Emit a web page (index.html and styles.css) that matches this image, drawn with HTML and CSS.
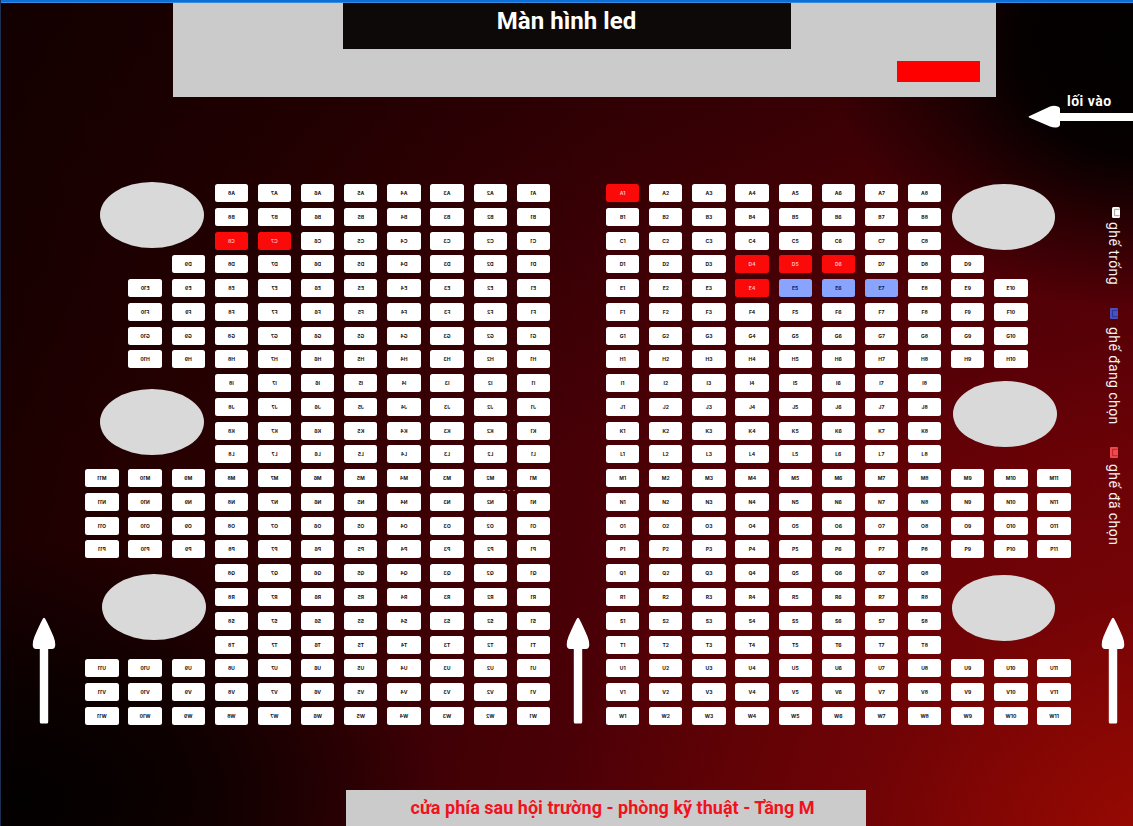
FILE: index.html
```html
<!DOCTYPE html>
<html lang="vi">
<head>
<meta charset="utf-8">
<title>Sơ đồ ghế</title>
<link rel="stylesheet" href="styles.css">
</head>
<body>
<div class="hall">
  <header class="stage">
    <div class="screen">Màn hình led</div>
    <div class="podium"></div>
  </header>

  <main class="floor">
    <section class="block block-left" id="left"></section>
    <section class="block block-right" id="right"></section>
    <aside class="legend">
      <div class="legend-item free">
        <svg class="chair" viewBox="0 0 8 11"><rect width="8" height="11" rx="1.500" fill="currentColor"/><path d="M7.600 2.300H2.600V8.700H7.600" fill="none" stroke="#8a7070" stroke-width=".7"/></svg>
        <span>ghế trống</span>
      </div>
      <div class="legend-item picking">
        <svg class="chair" viewBox="0 0 8 11"><rect width="8" height="11" rx="1" fill="currentColor"/><path d="M7.600 2.300H2.600V8.700H7.600" fill="none" stroke="#262a88" stroke-width=".8"/></svg>
        <span>ghế đang chọn</span>
      </div>
      <div class="legend-item taken">
        <svg class="chair" viewBox="0 0 8 11"><rect width="8" height="11" rx="1" fill="currentColor"/><path d="M7.600 2.300H2.600V8.700H7.600" fill="none" stroke="#ac1c20" stroke-width=".8"/></svg>
        <span>ghế đã chọn</span>
      </div>
    </aside>
  </main>

  <footer class="backdoor">cửa phía sau hội trường - phòng kỹ thuật - Tầng M</footer>

  <i class="table t1"></i><i class="table t2"></i><i class="table t3"></i>
  <i class="table t4"></i><i class="table t5"></i><i class="table t6"></i>

  <div class="entrance">lối vào</div>
  <svg class="arrow-in" viewBox="0 0 105 24"><path d="M1 11.2 22 1.5Q25 .5 28 1Q32 1.5 32 4V8H105V16H32V19.500Q32 22 28 22.500Q25 22.700 22 21.500L1 12.500Q0 11.800 1 11.200Z" fill="#fff"/></svg>
  <svg class="arrow a1" viewBox="0 0 24 108"><use href="#up"/></svg>
  <svg class="arrow a2" viewBox="0 0 24 108"><use href="#up"/></svg>
  <svg class="arrow a3" viewBox="0 0 24 108"><use href="#up"/></svg>
  <svg class="defs"><defs><path id="up" d="M11 1.500Q12 .2 13 1.500Q14.500 3.500 21.500 19.500Q23.500 24.500 23.300 28Q23 31.800 20 32H16.200V105Q16.200 106.500 14.800 106.500H9.200Q7.800 106.500 7.800 105V32H4Q1 31.800 .7 28Q.5 24.500 2.500 19.500Q9.500 3.500 11 1.500Z" fill="#fff"/></defs></svg>
  <div class="marks"><b></b><b></b><b></b></div>
</div>
<script src="seats.js"></script>
</body>
</html>
```
FILE: styles.css
```css
* { box-sizing: border-box; }
body { margin: 0; font-family: Roboto, "Liberation Sans", sans-serif; }

.hall {
  position: relative;
  width: 1133px;
  height: 826px;
  overflow: hidden;
  display: flex;
  flex-direction: column;
  border-left: 1px solid #1c2f52;
  background:
    linear-gradient(#0a70d8 0 2px, #3a8be0 2px 3px) 0 0 / 100% 3px no-repeat,
    radial-gradient(ellipse 310px 260px at 1140px 50px, #030000 0, rgba(3,0,0,.95) 40%, rgba(3,0,0,.4) 72%, transparent 100%),
    radial-gradient(ellipse 420px 260px at 20px 800px, #030000 0, rgba(3,0,0,.7) 45%, transparent 100%),
    radial-gradient(ellipse 620px 520px at 1170px 850px, rgba(165,12,0,.85) 0, rgba(140,8,4,.4) 50%, transparent 100%),
    linear-gradient(rgba(15,0,0,.5) 0, rgba(15,0,0,.25) 25%, transparent 55%),
    linear-gradient(100deg, #170000 0, #280002 22%, #460006 50%, #5c0007 78%, #660008 100%);
}

.stage {
  width: 823px;
  height: 94.4px;
  margin: 3px 0 0 172px;
  background: #cbcbcb;
  display: flex;
  flex-direction: column;
  align-items: center;
}
.screen {
  width: 448px;
  height: 46.4px;
  margin-right: 36px;
  background: #0c0908;
  color: #fff;
  font-weight: 700;
  font-size: 24px;
  letter-spacing: .05px;
  line-height: 36px;
  text-align: center;
}
.podium {
  align-self: flex-end;
  width: 83px;
  height: 21px;
  margin: 11.6px 16px 0 0;
  background: #f00;
}

.floor {
  display: flex;
  align-items: flex-start;
  margin-top: 86.600px;
  padding-left: 83.400px;
  height: 606px;
}
.block {
  width: 466px;
  display: flex;
  flex-direction: column;
  gap: 5.77px;
}
.block-left { transform: scaleX(-1); margin-right: 55.600px; }
.row { display: flex; gap: 9.85px; height: 18px; }
.seat {
  flex: none;
  width: 33.3px;
  height: 18px;
  border-radius: 2.500px;
  background: #fff;
  color: #111;
  font: 700 5px/18px Inter, sans-serif;
  text-align: center;
}
.seat.taken { background: #fb0a0a; color: #ffb4b4; }
.seat.picking { background: #88a4ff; color: #0c1c58; }

.legend {
  margin: 23px 0 0 32px;
  display: flex;
  writing-mode: vertical-rl;
  font-size: 14px;
  letter-spacing: .42px;
  line-height: 20px;
}
.legend-item { display: flex; align-items: center; }
.legend-item span { color: #f6f0f0; }
.chair { width: 8px; height: 11px; margin-bottom: 4px; flex: none; position: relative; left: 2px; }
.free { color: #fff; height: 101px; }
.legend .picking { height: 139px; color: #4a52c0; }
.legend .picking .chair { margin-bottom: 8px; left: 0; }
.legend .taken { color: #f04a4e; }
.legend .taken .chair { margin-bottom: 6px; left: 0; }

.backdoor {
  width: 520px;
  height: 36px;
  margin: 0 0 0 345px;
  background: #cbcbcb;
  color: #f0121c;
  font-weight: 700;
  font-size: 18px;
  letter-spacing: .02px;
  line-height: 36px;
  text-align: center;
  padding-left: 13px;
  white-space: nowrap;
}

.table {
  position: absolute;
  width: 103.500px;
  height: 66px;
  border-radius: 50%;
  background: #d9d9d9;
}
.t1 { left: 99px; top: 182px; }
.t2 { left: 99px; top: 389px; }
.t3 { left: 101px; top: 574px; }
.t4 { left: 950.600px; top: 184px; }
.t5 { left: 952px; top: 381px; }
.t6 { left: 950.600px; top: 575px; }

.entrance {
  position: absolute;
  left: 1066px;
  top: 92px;
  color: #fff;
  font-weight: 700;
  font-size: 14px;
  letter-spacing: .5px;
  line-height: 18px;
  white-space: nowrap;
}
.arrow-in { position: absolute; left: 1027px; top: 105px; width: 105px; height: 24px; }
.arrow { position: absolute; top: 617px; width: 24px; height: 108px; }
.a1 { left: 30.500px; }
.a2 { left: 565px; }
.a3 { left: 1099.500px; }
.defs { position: absolute; width: 0; height: 0; }
.marks { position: absolute; left: 502px; top: 490px; display: flex; gap: 3px; }
.marks b { width: 2px; height: 1px; background: #8e4a4c; }
```
FILE: seats.js
```javascript
// Seats per row, front (A) to back (W); both blocks share one shape.
const counts = [8, 8, 8, 9, 10, 10, 10, 10, 8, 8, 8, 8, 11, 11, 11, 11, 8, 8, 8, 8, 11, 11, 11];
const state = {
  left: { C7: 'taken', C8: 'taken' },
  right: { A1: 'taken', D4: 'taken', D5: 'taken', D6: 'taken', E4: 'taken', E5: 'picking', E6: 'picking', E7: 'picking' }
};
for (const side of ['left', 'right']) {
  const block = document.getElementById(side);
  counts.forEach((count, r) => {
    const row = document.createElement('div');
    row.className = 'row';
    for (let n = 1; n <= count; n++) {
      const id = String.fromCharCode(65 + r) + n;
      const seat = document.createElement('div');
      seat.className = 'seat ' + (state[side][id] || '');
      seat.textContent = id;
      row.append(seat);
    }
    block.append(row);
  });
}
```
